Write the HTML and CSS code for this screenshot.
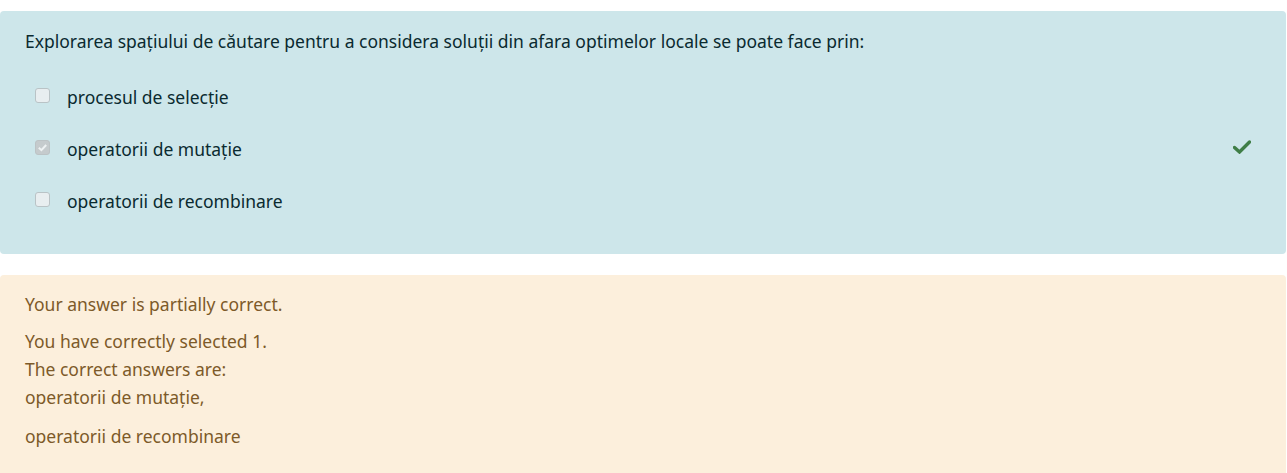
FILE: index.html
```html
<!DOCTYPE html>
<html>
<head>
<meta charset="utf-8">
<link rel="stylesheet" href="styles.css">
</head>
<body>
<div class="formulation">
  <div class="qtext">Explorarea spațiului de căutare pentru a considera soluții din afara optimelor locale se poate face prin:</div>
  <div class="answers">
    <div class="opt">
      <span class="cb"></span>
      <span class="label">procesul de selecție</span>
    </div>
    <div class="opt">
      <span class="cb checked"><svg viewBox="0 0 15 15" width="15" height="15"><path d="M3.8 7.8 L6.4 10.2 L11.2 5" fill="none" stroke="#eef2f3" stroke-width="2"/></svg></span>
      <span class="label">operatorii de mutație</span>
      <svg class="tick" viewBox="0 0 18 14" width="18" height="14"><path d="M1.5 7.5 L6.5 12 L16.5 2" fill="none" stroke="#3f7e47" stroke-width="3.4" stroke-linecap="round"/></svg>
    </div>
    <div class="opt">
      <span class="cb"></span>
      <span class="label">operatorii de recombinare</span>
    </div>
  </div>
</div>
<div class="outcome">
  <div class="fb-line">Your answer is partially correct.</div>
  <div class="fb-block">You have correctly selected 1.<br>The correct answers are:<br>operatorii de mutație,</div>
  <div class="fb-line last">operatorii de recombinare</div>
</div>
</body>
</html>
```
FILE: styles.css
```css
html, body {
  margin: 0;
  padding: 0;
  background: #fff;
}
body {
  font-family: "Noto Sans", "Open Sans", sans-serif;
  font-size: 17.5px;
  line-height: 1.5;
  padding: 11px 1px 0 0;
}
.formulation {
  background: #cde6ea;
  color: #0a2a30;
  border-radius: 4px;
  padding: 17px 25px 23px 25px;
  height: 203px;
}
.qtext {
  line-height: 26px;
  margin-bottom: 29px;
}
.opt {
  display: flex;
  align-items: center;
  height: 28px;
  margin-bottom: 24px;
  padding-left: 10px;
}
.cb {
  flex: none;
  width: 15px;
  height: 15px;
  box-sizing: border-box;
  border: 1px solid #b9c3c6;
  background: #e8eef0;
  border-radius: 3px;
  margin-right: 17px;
  margin-top: -3px;
  display: flex;
}
.cb.checked {
  background: #c5cbcd;
  border-color: #bcc3c5;
}
.cb.checked svg { display: block; margin: -1px; }
.label {
  color: #0a2a30;
}
.tick {
  flex: none;
  margin-left: auto;
  margin-right: 10px;
  margin-top: -4px;
}
.outcome {
  margin-top: 21px;
  background: #fcefdc;
  color: #7d5a29;
  border-radius: 4px;
  padding: 16px 25px 20px 25px;
  min-height: 200px;
}
.fb-line { line-height: 26px; margin-bottom: 10px; }
.fb-block { line-height: 28px; margin-bottom: 12px; }
```
